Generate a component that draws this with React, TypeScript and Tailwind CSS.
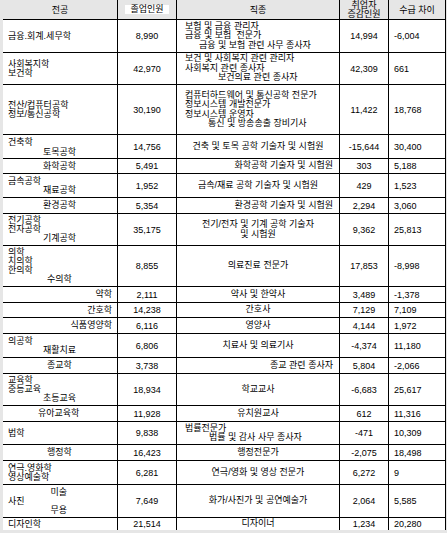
import type { ReactNode } from "react";

const W1 = "w-[115px]";
const W2 = "w-[59px]";
const W3 = "w-[163px]";
const W4 = "w-[49px]";
const W5 = "w-[57px]";

function Cell({ w, className = "", children, last }: { w: string; className?: string; children?: ReactNode; last?: boolean }) {
  return (
    <div className={`${w} shrink-0 border-r border-black ${last ? "" : "border-b"} flex flex-col justify-center overflow-hidden ${className}`}>
      {children}
    </div>
  );
}

function L({ children, className = "" }: { children: ReactNode; className?: string }) {
  return <div className={`whitespace-pre ${className}`}>{children}</div>;
}

function Row({ h, c1, c1cls = "pl-[5px]", c2, c3, c3cls = "items-center", c4, c5, last }: {
  h: string;
  c1: ReactNode;
  c1cls?: string;
  c2: string;
  c3: ReactNode;
  c3cls?: string;
  c4: string;
  c5: string;
  last?: boolean;
}) {
  return (
    <div className={`flex ${h}`}>
      <Cell w={W1} className={`leading-[9px] ${c1cls}`} last={last}>{c1}</Cell>
      <Cell w={W2} className="items-center" last={last}>{c2}</Cell>
      <Cell w={W3} className={`leading-[9.5px] ${c3cls}`} last={last}>{c3}</Cell>
      <Cell w={W4} className="items-center" last={last}>{c4}</Cell>
      <Cell w={W5} className="pl-[5px]" last={last}>{c5}</Cell>
    </div>
  );
}

export default function App() {
  return (
    <div className="h-[533px] w-[447px] overflow-hidden bg-[#e6e6e6] pl-[3px] font-['Liberation_Sans','Noto_Sans_CJK_KR',sans-serif] text-[9px] leading-[10px] text-black">
      <div className="w-[443px] bg-white">
        {/* header */}
        <div className="flex h-[20px] bg-[#e6e6e6]">
          <Cell w={W1} className="items-center">전공</Cell>
          <Cell w={W2} className="items-center">
            <span className="bg-white px-[5px] leading-[9px]">졸업인원</span>
          </Cell>
          <Cell w={W3} className="items-center">직종</Cell>
          <Cell w={W4} className="items-center leading-[9px]">
            <L>취업자</L>
            <L>증감인원</L>
          </Cell>
          <Cell w={W5} className="items-center">수급 차이</Cell>
        </div>

        <Row h="h-[33px]" c1={<L>금융.회계.세무학</L>} c2="8,990"
          c3cls="pl-[8px]"
          c3={<>
            <L>보험 및 금융 관리자</L>
            <L>금융 및 보험  전문가</L>
            <L className="pl-[14px]">금융 및 보험 관련 사무 종사자</L>
          </>}
          c4="14,994" c5="-6,004" />

        <Row h="h-[32px]" c1={<><L>사회복지학</L><L>보건학</L></>} c2="42,970"
          c3cls="pl-[8px]"
          c3={<>
            <L>보건 및 사회복지 관련 관리자</L>
            <L>사회복지 관련 종사자</L>
            <L className="pl-[33px]">보건의료 관련 종사자</L>
          </>}
          c4="42,309" c5="661" />

        <Row h="h-[50px]" c1={<><L>전산/컴퓨터공학</L><L>정보/통신공학</L></>} c2="30,190"
          c3cls="pl-[8px]"
          c3={<>
            <L>컴퓨터하드웨어 및 통신공학 전문가</L>
            <L>정보시스템 개발전문가</L>
            <L>정보시스템 운영자</L>
            <L className="pl-[23px]">통신 및 방송송출 장비기사</L>
          </>}
          c4="11,422" c5="18,768" />

        <Row h="h-[24px]" c1={<><L>건축학</L><L className="pl-[35px]">토목공학</L></>} c1cls="pl-[5px] leading-[10px]" c2="14,756"
          c3={<L>건축 및 토목 공학 기술자 및 시험원</L>}
          c4="-15,644" c5="30,400" />

        <Row h="h-[15px]" c1={<L>화학공학</L>} c1cls="pl-[40px]" c2="5,491"
          c3cls="items-end pr-[6px]"
          c3={<L>화학공학 기술자 및 시험원</L>}
          c4="303" c5="5,188" />

        <Row h="h-[24px]" c1={<><L>금속공학</L><L className="pl-[35px]">재료공학</L></>} c2="1,952"
          c3={<L>금속/재료 공학 기술자 및 시험원</L>}
          c4="429" c5="1,523" />

        <Row h="h-[16px]" c1={<L>환경공학</L>} c1cls="pl-[40px]" c2="5,354"
          c3cls="items-end pr-[6px]"
          c3={<L>환경공학 기술자 및 시험원</L>}
          c4="2,294" c5="3,060" />

        <Row h="h-[32px]" c1={<><L>전기공학</L><L>전자공학</L><L className="pl-[35px]">기계공학</L></>} c1cls="pl-[5px] leading-[9.5px]" c2="35,175"
          c3={<><L>전기/전자 및 기계 공학 기술자</L><L>및 시험원</L></>}
          c4="9,362" c5="25,813" />

        <Row h="h-[41px]" c1={<><L>의학</L><L>치의학</L><L>한의학</L><L className="pl-[39px]">수의학</L></>} c2="8,855"
          c3={<L>의료진료 전문가</L>}
          c4="17,853" c5="-8,998" />

        <Row h="h-[16px]" c1={<L>약학</L>} c1cls="items-end pr-[5px]" c2="2,111"
          c3={<L>약사 및 한약사</L>}
          c4="3,489" c5="-1,378" />

        <Row h="h-[15px]" c1={<L>간호학</L>} c1cls="items-end pr-[5px]" c2="14,238"
          c3={<L>간호사</L>}
          c4="7,129" c5="7,109" />

        <Row h="h-[16px]" c1={<L>식품영양학</L>} c1cls="items-end pr-[5px]" c2="6,116"
          c3={<L>영양사</L>}
          c4="4,144" c5="1,972" />

        <Row h="h-[24px]" c1={<><L>의공학</L><L className="pl-[35px]">재활치료</L></>} c2="6,806"
          c3={<L>치료사 및 의료기사</L>}
          c4="-4,374" c5="11,180" />

        <Row h="h-[16px]" c1={<L>종교학</L>} c1cls="pl-[44px]" c2="3,738"
          c3cls="items-end pr-[6px]"
          c3={<L>종교 관련 종사자</L>}
          c4="5,804" c5="-2,066" />

        <Row h="h-[32px]" c1={<><L>교육학</L><L>중등교육</L><L className="pl-[35px]">초등교육</L></>} c1cls="pl-[5px] leading-[9.5px]" c2="18,934"
          c3={<L>학교교사</L>}
          c4="-6,683" c5="25,617" />

        <Row h="h-[16px]" c1={<L>유아교육학</L>} c1cls="pl-[35px]" c2="11,928"
          c3={<L>유치원교사</L>}
          c4="612" c5="11,316" />

        <Row h="h-[23px]" c1={<L>법학</L>} c2="9,838"
          c3cls="pl-[8px] leading-[9px]"
          c3={<><L>법률전문가</L><L className="pl-[24px]">법률 및 감사 사무 종사자</L></>}
          c4="-471" c5="10,309" />

        <Row h="h-[16px]" c1={<L>행정학</L>} c1cls="pl-[44px]" c2="16,423"
          c3={<L>행정전문가</L>}
          c4="-2,075" c5="18,498" />

        <Row h="h-[24px]" c1={<><L>연극.영화학</L><L>영상예술학</L></>} c1cls="pl-[5px] leading-[9px]" c2="6,281"
          c3={<L>연극/영화 및 영상 전문가</L>}
          c4="6,272" c5="9" />

        <Row h="h-[33px]"
          c1={
            <div className="flex items-center">
              <L>사진</L>
              <div className="ml-[26px] flex h-[27px] flex-col justify-between">
                <L>미술</L>
                <L>무용</L>
              </div>
            </div>
          }
          c2="7,649"
          c3={<L>화가/사진가 및 공연예술가</L>}
          c4="2,064" c5="5,585" />

        <Row h="h-[12px]" last c1={<L>디자인학</L>} c2="21,514"
          c3={<L>디자이너</L>}
          c4="1,234" c5="20,280" />
      </div>
    </div>
  );
}
